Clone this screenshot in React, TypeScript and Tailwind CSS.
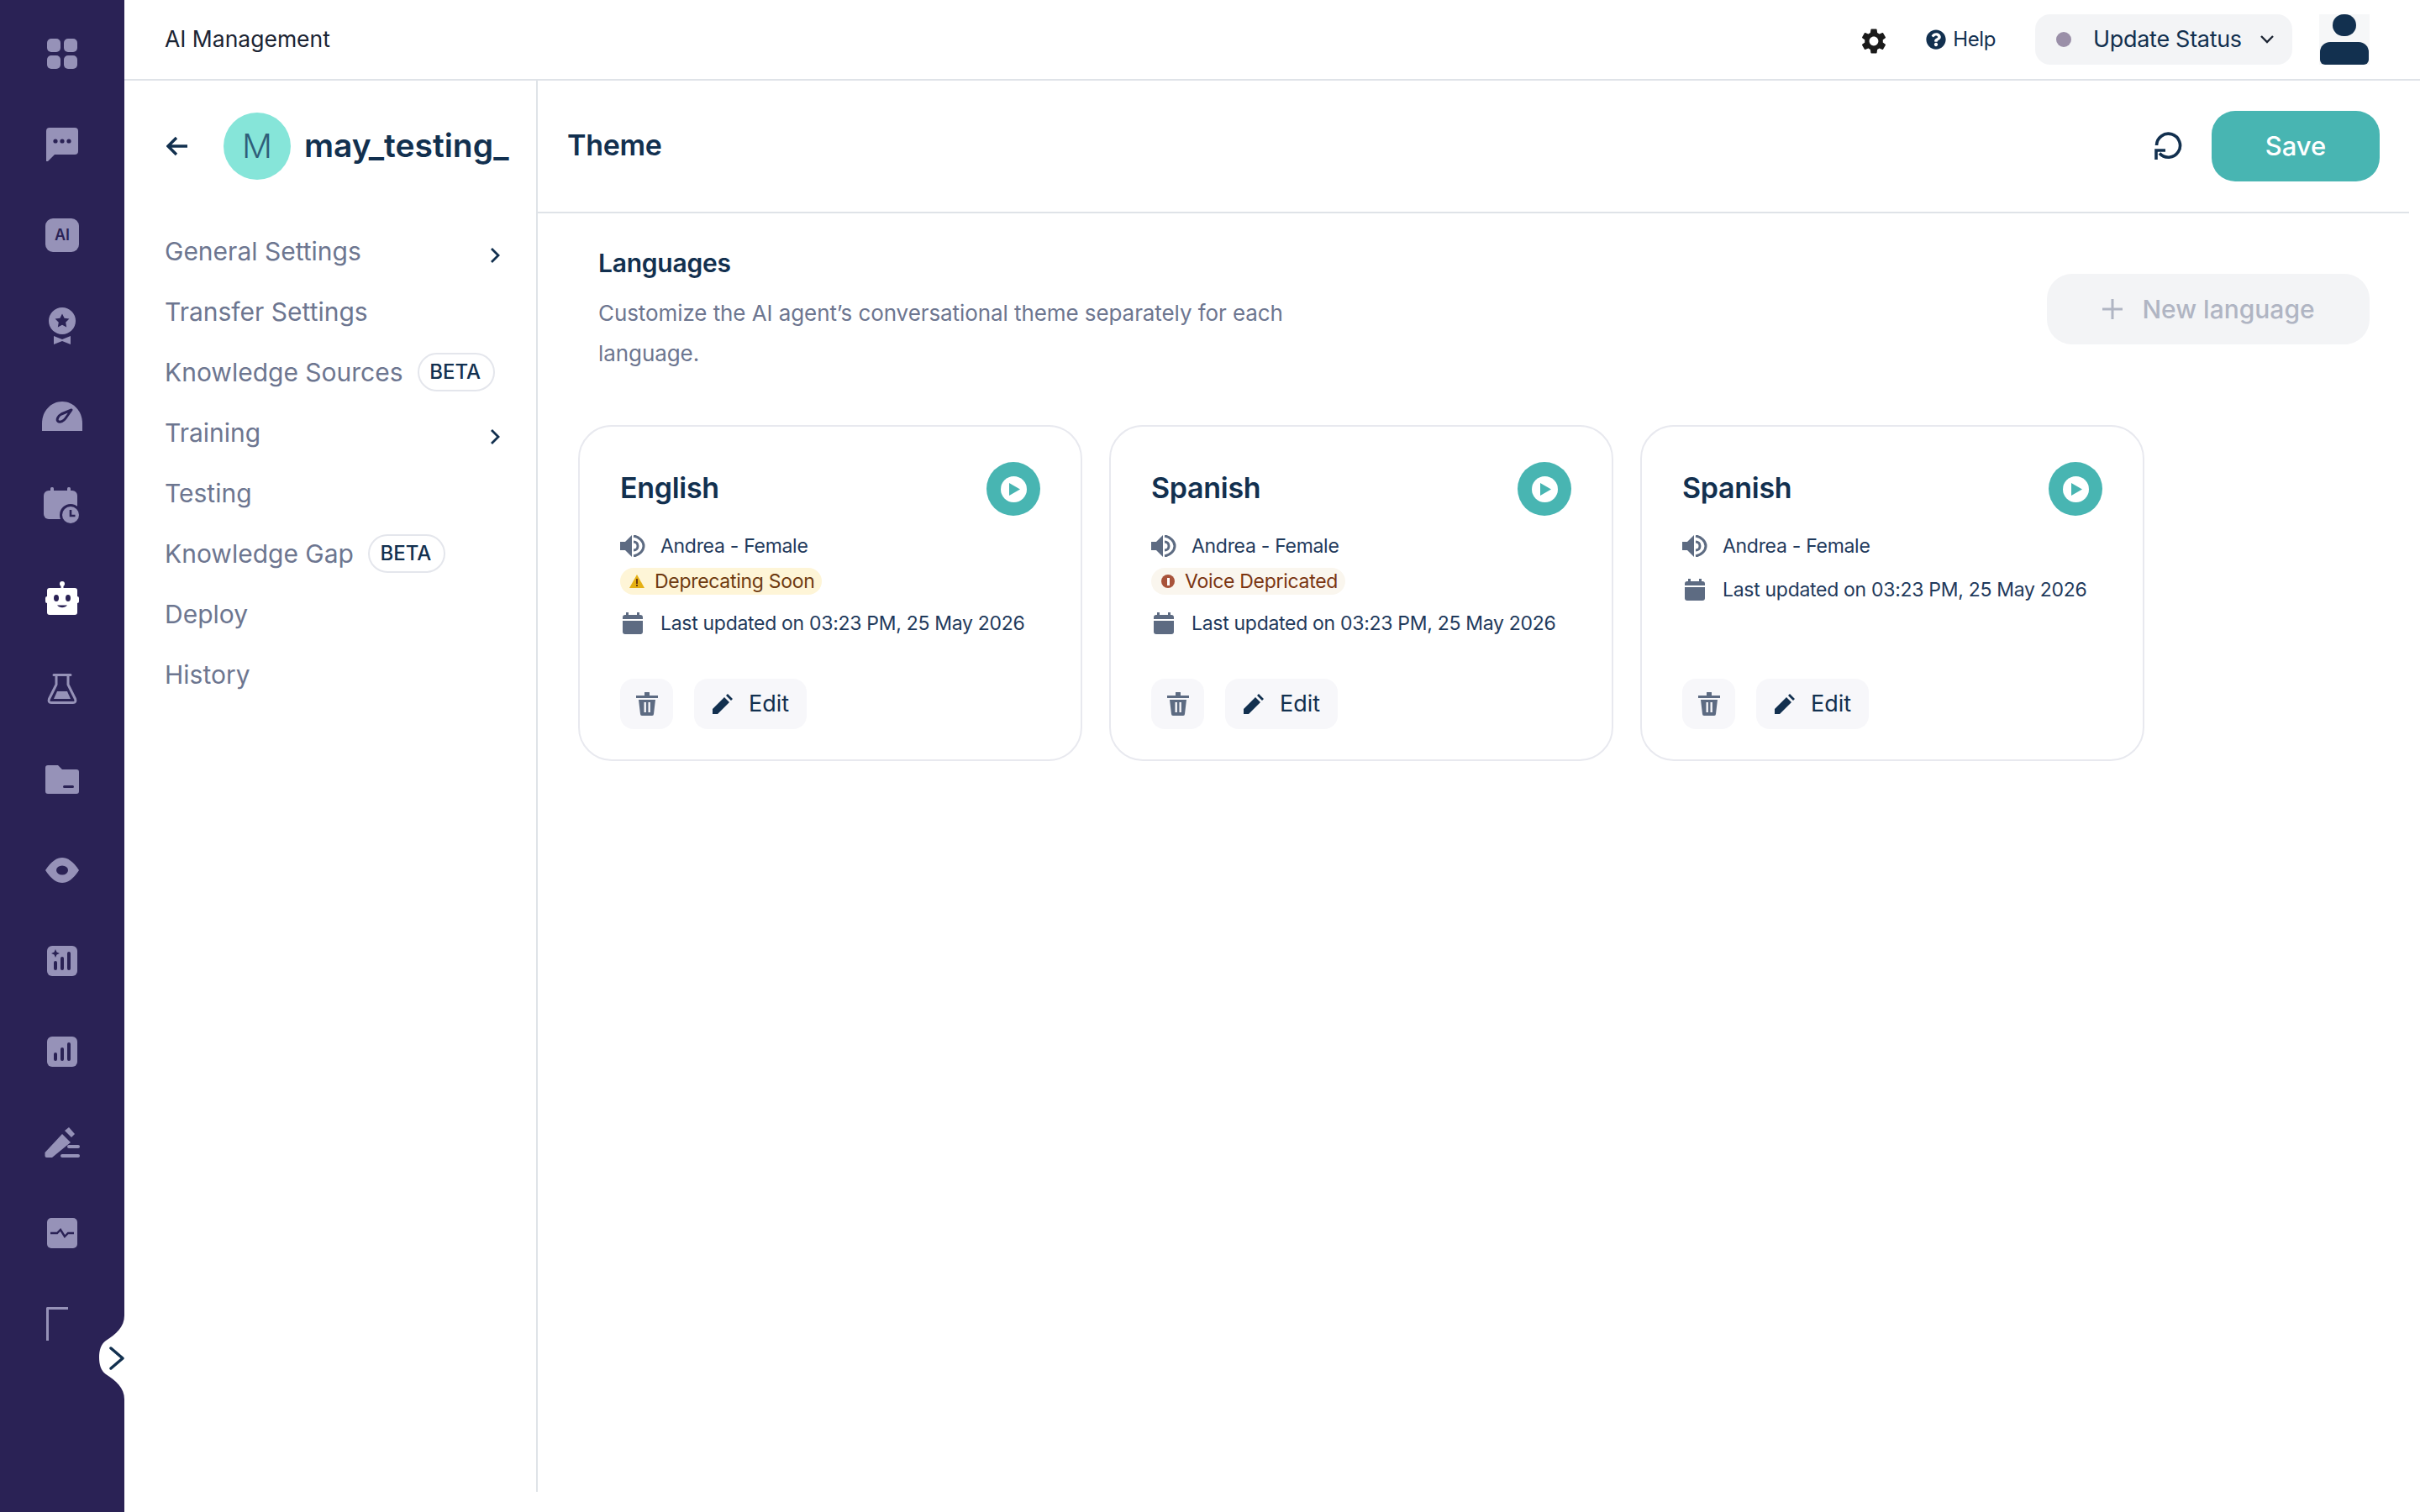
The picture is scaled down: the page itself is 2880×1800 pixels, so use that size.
import React from "react";
import { MdSettings } from "react-icons/md";
import { FaQuestionCircle } from "react-icons/fa";

const S = "#9692b8";
const D = "#2a2255";

function SideIcon({ w, h, children }: { w: number; h: number; children: React.ReactNode }) {
  return (
    <div className="h-[108px] flex items-center justify-center">
      <svg width={w} height={h} viewBox={`0 0 ${w} ${h}`}>{children}</svg>
    </div>
  );
}

function Sidebar() {
  return (
    <div className="w-[148px] shrink-0 bg-[#2a2255] relative pt-[10px]">
      <SideIcon w={36} h={36}>
        <rect x="0" y="0" width="16" height="16" rx="5" fill={S} />
        <rect x="20" y="0" width="16" height="16" rx="5" fill={S} />
        <rect x="0" y="20" width="16" height="16" rx="5" fill={S} />
        <rect x="20" y="20" width="16" height="16" rx="5" fill={S} />
      </SideIcon>
      <SideIcon w={38} h={40}>
        <path d="M4 0H34A4 4 0 0 1 38 4V28A4 4 0 0 1 34 32H10L2 40H0V4A4 4 0 0 1 4 0Z" fill={S} />
        <circle cx="11" cy="16" r="2.6" fill={D} />
        <circle cx="19" cy="16" r="2.6" fill={D} />
        <circle cx="27" cy="16" r="2.6" fill={D} />
      </SideIcon>
      <div className="h-[108px] flex items-center justify-center">
        <div className="w-[40px] h-[40px] rounded-[9px] bg-[#9692b8] flex items-center justify-center text-[#2a2255] text-[18px] font-semibold leading-none">AI</div>
      </div>
      <SideIcon w={32} h={44}>
        <circle cx="16" cy="16" r="16" fill={S} />
        <path d="M16 7.5L18.6 12.8L24.4 13.6L20.2 17.7L21.2 23.5L16 20.8L10.8 23.5L11.8 17.7L7.6 13.6L13.4 12.8Z" fill={D} />
        <path d="M6 34L16 38L26 34V44L16 40L6 44Z" fill={S} />
      </SideIcon>
      <SideIcon w={48} h={36}>
        <path d="M0 35V26C0 11 11 0 24 0S48 11 48 26V35Z" fill={S} />
        <path d="M35 10L23 15C19 17 17 22 19 23.5C21.5 25.5 26 23 28 20Z" fill="none" stroke={D} strokeWidth="3" strokeLinejoin="round" />
      </SideIcon>
      <SideIcon w={44} h={48}>
        <rect x="8" y="0" width="4" height="6" rx="1.5" fill={S} />
        <rect x="28" y="0" width="4" height="6" rx="1.5" fill={S} />
        <rect x="0" y="4" width="40" height="34" rx="6" fill={S} />
        <circle cx="32" cy="33" r="13" fill={D} />
        <circle cx="32" cy="33" r="10" fill={S} />
        <path d="M32 27V34H37.5" fill="none" stroke={D} strokeWidth="2.6" />
      </SideIcon>
      <SideIcon w={40} h={40}>
        <circle cx="20" cy="3" r="3" fill="#fff" />
        <rect x="18.5" y="3" width="3" height="7" fill="#fff" />
        <rect x="2" y="8" width="36" height="32" rx="3" fill="#fff" />
        <rect x="0" y="18" width="4" height="8" rx="2" fill="#fff" />
        <rect x="36" y="18" width="4" height="8" rx="2" fill="#fff" />
        <ellipse cx="13" cy="20" rx="3" ry="4" fill={D} />
        <ellipse cx="27" cy="20" rx="3" ry="4" fill={D} />
        <path d="M14 28.5C17 32 23 32 26 28.5Z" fill={D} />
      </SideIcon>
      <SideIcon w={36} h={36}>
        <path d="M8 1.5H28M11 2V13L2.5 30Q1 34.5 5 34.5H31Q35 34.5 33.5 30L25 13V2" fill="none" stroke={S} strokeWidth="3" strokeLinejoin="round" strokeLinecap="round" />
        <path d="M12 21H24L28 30H8Z" fill={S} />
      </SideIcon>
      <SideIcon w={40} h={34}>
        <path d="M3 0H15L20 5H37A3 3 0 0 1 40 8V31A3 3 0 0 1 37 34H3A3 3 0 0 1 0 31V3A3 3 0 0 1 3 0Z" fill={S} />
        <rect x="21" y="24" width="13" height="3" rx="1.5" fill={D} />
      </SideIcon>
      <SideIcon w={40} h={30}>
        <path d="M0 15C7 4 14 0 20 0S33 4 40 15C33 26 26 30 20 30S7 26 0 15Z" fill={S} />
        <ellipse cx="20" cy="15" rx="7" ry="5.5" fill={D} />
      </SideIcon>
      <SideIcon w={36} h={36}>
        <rect width="36" height="36" rx="6" fill={S} />
        <path d="M10 4L11.5 7.5L15 9L11.5 10.5L10 14L8.5 10.5L5 9L8.5 7.5Z" fill={D} />
        <rect x="8" y="18" width="4" height="11" rx="2" fill={D} />
        <rect x="16" y="13" width="4" height="16" rx="2" fill={D} />
        <rect x="24" y="7" width="4" height="22" rx="2" fill={D} />
      </SideIcon>
      <SideIcon w={36} h={36}>
        <rect width="36" height="36" rx="6" fill={S} />
        <rect x="8" y="19" width="4" height="10" rx="2" fill={D} />
        <rect x="16" y="13" width="4" height="16" rx="2" fill={D} />
        <rect x="24" y="7" width="4" height="22" rx="2" fill={D} />
      </SideIcon>
      <SideIcon w={42} h={36}>
        <path d="M0.5 30L21 8L31 18L9 36H2.5Q0.5 36 0.5 34Z" fill={S} />
        <path d="M24 4L29 0L36 8L32 12Z" fill={S} />
        <rect x="27" y="21" width="15" height="4" rx="2" fill={S} />
        <rect x="19" y="32" width="23" height="4" rx="2" fill={S} />
      </SideIcon>
      <SideIcon w={36} h={36}>
        <rect width="36" height="36" rx="5" fill={S} />
        <path d="M4 18H12L16 14L21 22L25 18H32" fill="none" stroke={D} strokeWidth="2.4" />
      </SideIcon>
      <div className="h-[108px] flex items-center justify-center pr-[12px]">
        <div className="w-[26px] h-[40px] border-t-[3px] border-l-[3px] border-[#9692b8] rounded-tl-[2px]" />
      </div>
      <svg className="absolute left-[116px] top-[1566px]" width="32" height="100" viewBox="0 0 32 100">
        <path d="M32 0C32 14 22 22 10 30C4 34 2 42 2 50S4 66 10 70C22 78 32 86 32 100Z" fill="#fff" />
        <path d="M16 39L30 51L16 63" fill="none" stroke="#12304f" strokeWidth="3.5" strokeLinecap="round" strokeLinejoin="round" />
      </svg>
    </div>
  );
}

function TopBar() {
  return (
    <div className="h-[96px] box-border border-b-2 border-[#dfe3e8] flex items-center pl-[48px] shrink-0">
      <div className="text-[26.5px] text-[#1b2433]">AI Management</div>
      <div className="ml-auto flex items-center">
        <MdSettings size={36} color="#1a1a1a" className="mr-[44px] mt-[4px]" />
        <FaQuestionCircle size={24} color="#12304f" />
        <span className="ml-[8px] text-[24px] text-[#12304f] tracking-[-0.4px]">Help</span>
        <div className="ml-[47px] w-[306px] h-[60px] rounded-[18px] bg-[#f3f4f6] flex items-center pl-[25px]">
          <span className="w-[18px] h-[18px] rounded-full bg-[#9a8fa8]" />
          <span className="ml-[26px] text-[27px] text-[#12304f] tracking-[-0.3px]">Update Status</span>
          <svg className="ml-[21px]" width="18" height="12" viewBox="0 0 18 12">
            <path d="M2 2L9 9L16 2" fill="none" stroke="#1b2433" strokeWidth="2.4" />
          </svg>
        </div>
        <div className="ml-[32px] mr-[60px] w-[60px] h-[60px] bg-[#f6f7f8] flex flex-col items-center overflow-hidden">
          <div className="w-[28px] h-[26px] rounded-[14px] bg-[#12304f]" />
          <div className="mt-[7px] w-[58px] h-[27px] rounded-t-[12px] rounded-b-[6px] bg-[#12304f]" />
        </div>
      </div>
    </div>
  );
}

const Chevron = () => (
  <svg width="24" height="24" viewBox="0 0 24 24" className="mt-[10px]">
    <path d="M7 4L15 12L7 20" fill="none" stroke="#12304f" strokeWidth="2.8" />
  </svg>
);

const Beta = () => (
  <span className="ml-[17px] h-[46px] w-[92px] rounded-full border-2 border-[#e4e6ec] flex items-center justify-center text-[24px] font-medium text-[#12304f] pr-[2px]">BETA</span>
);

function NavRow({ label, chevron, beta }: { label: string; chevron?: boolean; beta?: boolean }) {
  return (
    <div className="h-[72px] flex items-center justify-between">
      <div className="flex items-center">
        <span className="text-[30px] text-[#6d7690]">{label}</span>
        {beta && <Beta />}
      </div>
      {chevron && <Chevron />}
    </div>
  );
}

function SubNav() {
  return (
    <div className="w-[492px] h-[1680px] box-border shrink-0 border-r-2 border-[#dfe3e8]">
      <div className="pt-[38px] pl-[50px] flex items-center">
        <div className="w-[68px]">
          <svg width="26" height="24" viewBox="0 0 26 24">
            <path d="M25 12H3M12 2L2 12L12 22" fill="none" stroke="#12304f" strokeWidth="3.4" />
          </svg>
        </div>
        <div className="w-[80px] h-[80px] rounded-full bg-[#86e5d9] flex items-center justify-center text-[40px] font-light text-[#2f5f7a]">M</div>
        <div className="ml-[16px] text-[39px] font-semibold text-[#12304f] pb-[2px]">may_testing_</div>
      </div>
      <div className="mt-[49px] pl-[48px] pr-[36px]">
        <NavRow label="General Settings" chevron />
        <NavRow label="Transfer Settings" />
        <NavRow label="Knowledge Sources" beta />
        <NavRow label="Training" chevron />
        <NavRow label="Testing" />
        <NavRow label="Knowledge Gap" beta />
        <NavRow label="Deploy" />
        <NavRow label="History" />
      </div>
    </div>
  );
}

const Speaker = () => (
  <svg width="30" height="26" viewBox="0 0 30 26" className="shrink-0">
    <path d="M0 8H6L14 0V26L6 18H0Z" fill="#5d6b82" />
    <path d="M16 1C22 2 28 7 28 13S22 24 16 25M16 8C19 8 21 10 21 13S19 18 16 18" fill="none" stroke="#5d6b82" strokeWidth="3" />
  </svg>
);

const Cal = () => (
  <svg width="24" height="26" viewBox="0 0 24 26" className="shrink-0">
    <path d="M4 0H7V3H17V0H20V3H21A3 3 0 0 1 24 6V8H0V6A3 3 0 0 1 3 3H4Z" fill="#5d6b82" />
    <path d="M0 10H24V23A3 3 0 0 1 21 26H3A3 3 0 0 1 0 23Z" fill="#5d6b82" />
  </svg>
);

const Play = () => (
  <div className="w-[64px] h-[64px] rounded-full bg-[#48b5b2] flex items-center justify-center shrink-0 mb-[2px]">
    <div className="w-[31px] h-[31px] rounded-full bg-white flex items-center justify-center pl-[2px]">
      <svg width="13" height="15" viewBox="0 0 13 15"><path d="M0 0L13 7.5L0 15Z" fill="#48b5b2" /></svg>
    </div>
  </div>
);

function Card({ title, badge }: { title: string; badge?: "warn" | "err" }) {
  return (
    <div className="w-[600px] h-[400px] box-border rounded-[40px] border-2 border-[#e8e9ef] px-[48px] pt-[43px] pb-[36px] flex flex-col shrink-0 bg-white">
      <div className="flex items-center justify-between h-[64px]">
        <span className="text-[34px] font-semibold text-[#12304f] pb-[6px] tracking-[-0.3px]">{title}</span>
        <Play />
      </div>
      <div className="mt-[19px] h-[32px] flex items-center text-[23px] text-[#1f3a5c] tracking-[-0.3px] whitespace-nowrap">
        <Speaker />
        <span className="ml-[18px]">Andrea - Female</span>
      </div>
      {badge === "warn" && (
        <div className="mt-[10px] h-[32px] self-start rounded-full bg-[#fef5d7] flex items-center pl-[11px] pr-[9px] text-[23px] text-[#6e3a10] tracking-[-0.3px] whitespace-nowrap">
          <svg width="18" height="16" viewBox="0 0 18 16"><path d="M9 0L18 16H0Z" fill="#e5b014" /><rect x="8" y="5" width="2" height="6" fill="#6e3a10" /><rect x="8" y="12" width="2" height="2" fill="#6e3a10" /></svg>
          <span className="ml-[12px]">Deprecating Soon</span>
        </div>
      )}
      {badge === "err" && (
        <div className="mt-[10px] h-[32px] self-start rounded-full bg-[#faf6ee] flex items-center pl-[12px] pr-[9px] text-[23px] text-[#7a3512] tracking-[-0.3px] whitespace-nowrap">
          <span className="w-[16px] h-[16px] rounded-full bg-[#a8533a] flex items-center justify-center">
            <span className="w-[3px] h-[9px] bg-white" />
          </span>
          <span className="ml-[12px]">Voice Depricated</span>
        </div>
      )}
      <div className={`${badge ? "mt-[18px]" : "mt-[20px]"} h-[32px] flex items-center text-[23px] text-[#1f3a5c] tracking-[-0.3px] whitespace-nowrap`}>
        <span className="pl-[3px]"><Cal /></span>
        <span className="ml-[21px]">Last updated on 03:23 PM, 25 May 2026</span>
      </div>
      <div className="mt-auto flex items-center">
        <div className="w-[63px] h-[60px] rounded-[16px] bg-[#f7f7fa] flex items-center justify-center">
          <svg width="26" height="28" viewBox="0 0 26 28">
            <path d="M0 4H10V1A1 1 0 0 1 16 1V4H26V7H0Z" fill="#5d6b82" />
            <path d="M3 9H23L21 26A2 2 0 0 1 19 28H7A2 2 0 0 1 5 26Z" fill="#5d6b82" />
            <rect x="9.5" y="12" width="2.4" height="12" fill="#f7f7fa" />
            <rect x="14.5" y="12" width="2.4" height="12" fill="#f7f7fa" />
          </svg>
        </div>
        <div className="ml-[25px] w-[134px] h-[60px] rounded-[16px] bg-[#f7f7fa] flex items-center pl-[22px]">
          <svg width="24" height="24" viewBox="0 0 24 24">
            <path d="M0 24V18L14 4L20 10L6 24ZM16 2L18 0L24 6L22 8Z" fill="#12304f" />
          </svg>
          <span className="ml-[19px] text-[27px] text-[#12304f]">Edit</span>
        </div>
      </div>
    </div>
  );
}

function Main() {
  return (
    <div className="flex-1 min-w-0">
      <div className="mr-[13px] h-[158px] box-border border-b-2 border-[#dfe3e8] pt-[36px] pl-[35px] pr-[35px]">
        <div className="h-[84px] flex items-center">
          <span className="text-[34px] font-semibold text-[#12304f] pb-[3px] tracking-[-0.3px]">Theme</span>
          <svg className="ml-auto" width="34" height="34" viewBox="0 0 34 34">
            <path d="M2.5 16A14 14 0 1 1 6 25.5" fill="none" stroke="#12304f" strokeWidth="3.6" />
            <path d="M2 33V22H13" fill="none" stroke="#12304f" strokeWidth="3.6" />
          </svg>
          <div className="ml-[34px] w-[200px] h-[84px] rounded-[28px] bg-[#48b5b2] flex items-center justify-center text-white text-[31px] font-medium">Save</div>
        </div>
      </div>
      <div className="flex items-start justify-between pl-[72px] pr-[60px]">
        <div className="pt-[39px]">
          <div className="h-[40px] flex items-center text-[30px] font-semibold text-[#12304f] tracking-[-0.25px]">Languages</div>
          <div className="mt-[16px] w-[830px] text-[26px] leading-[48px] text-[#6d7690] tracking-[-0.08px]">
            Customize the AI agent’s conversational theme separately for each language.
          </div>
        </div>
        <div className="mt-[72px] w-[384px] h-[84px] rounded-[30px] bg-[#f3f4f6] flex items-center justify-center text-[#b0b5c3] text-[30px] font-medium">
          <svg width="26" height="26" viewBox="0 0 26 26"><path d="M13 1V25M1 13H25" fill="none" stroke="#b0b5c3" strokeWidth="3" /></svg>
          <span className="ml-[22px]">New language</span>
        </div>
      </div>
      <div className="mt-[61px] pl-[48px] flex gap-[32px]">
        <Card title="English" badge="warn" />
        <Card title="Spanish" badge="err" />
        <Card title="Spanish" />
      </div>
    </div>
  );
}

export default function App() {
  return (
    <div className="w-[2880px] h-[1800px] bg-white flex overflow-hidden font-['Inter',sans-serif]">
      <Sidebar />
      <div className="flex-1 min-w-0 flex flex-col">
        <TopBar />
        <div className="flex flex-1 min-h-0">
          <SubNav />
          <Main />
        </div>
      </div>
    </div>
  );
}
